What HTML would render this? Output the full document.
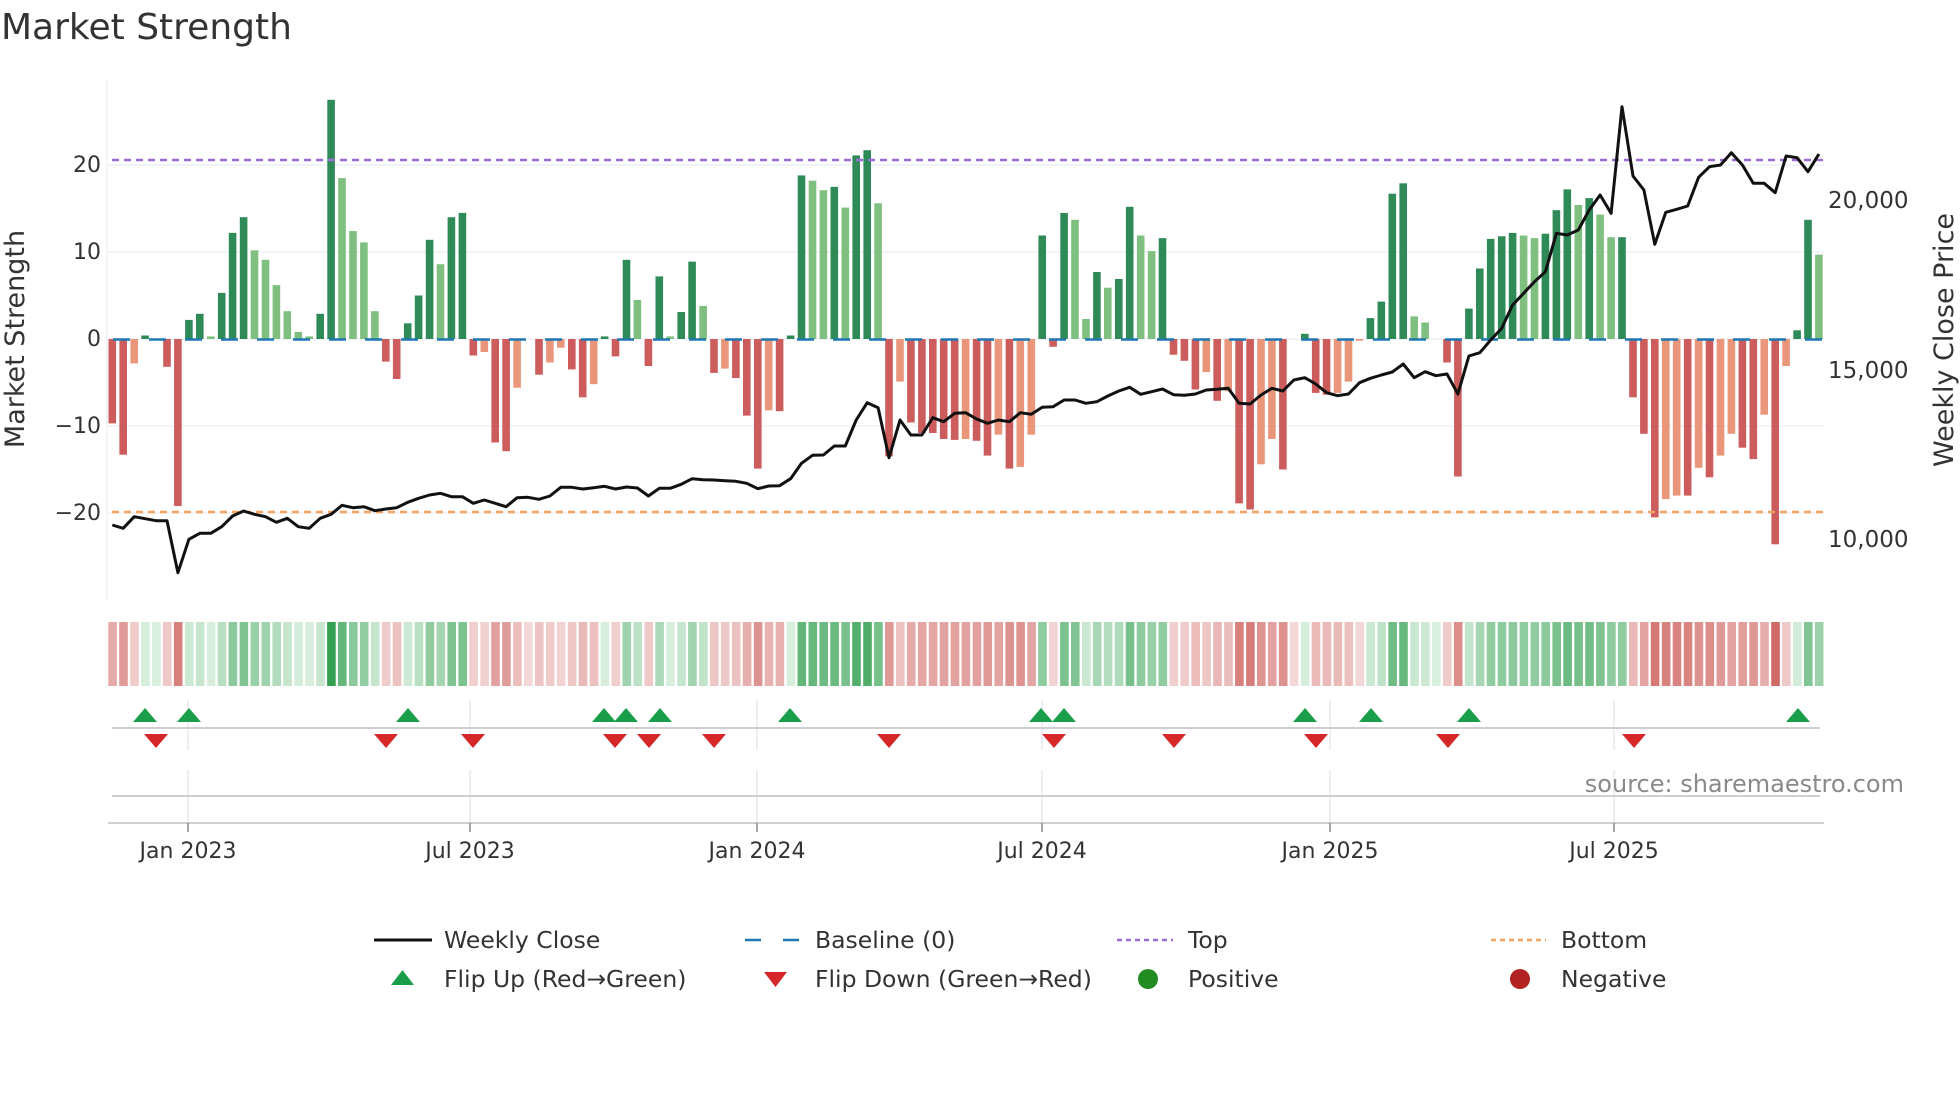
<!DOCTYPE html>
<html><head><meta charset="utf-8">
<style>
html,body{margin:0;padding:0;background:#fff;}
body{width:1960px;height:1102px;overflow:hidden;}
svg{display:block;font-family:"DejaVu Sans","Liberation Sans",sans-serif;}
</style></head>
<body>
<svg id="s" width="1960" height="1102" viewBox="0 0 1960 1102" xmlns="http://www.w3.org/2000/svg">
<rect width="1960" height="1102" fill="#fff"/>
<text x="1" y="39" font-size="36" fill="#333">Market Strength</text>
<g stroke="#eef0f5" stroke-width="1.5">
<line x1="108" y1="165" x2="1824" y2="165"/>
<line x1="108" y1="252" x2="1824" y2="252"/>
<line x1="108" y1="339" x2="1824" y2="339"/>
<line x1="108" y1="426" x2="1824" y2="426"/>
<line x1="108" y1="513" x2="1824" y2="513"/>
<line x1="107" y1="80" x2="107" y2="600"/>
</g>
<g font-size="22" fill="#333" text-anchor="end">
<text x="101" y="172">20</text>
<text x="101" y="259">10</text>
<text x="101" y="346">0</text>
<text x="101" y="433">−10</text>
<text x="101" y="520">−20</text>
</g>
<g font-size="23" fill="#333">
<text x="1828" y="208">20,000</text>
<text x="1828" y="378">15,000</text>
<text x="1828" y="547">10,000</text>
</g>
<text transform="translate(24,339) rotate(-90)" font-size="27" fill="#333" text-anchor="middle">Market Strength</text>
<text transform="translate(1953,340) rotate(-90)" font-size="27" fill="#333" text-anchor="middle">Weekly Close Price</text>
<g id="bars"></g>
<line x1="112" y1="160" x2="1824" y2="160" stroke="#9b6bd6" stroke-width="2.5" stroke-dasharray="7,5"/>
<line x1="112" y1="512" x2="1824" y2="512" stroke="#f4a460" stroke-width="2.5" stroke-dasharray="7,5"/>
<line x1="113" y1="339.5" x2="1824" y2="339.5" stroke="#1f77b4" stroke-width="2.5" stroke-dasharray="17,19"/>
<polyline id="price" fill="none" stroke="#111" stroke-width="3" stroke-linejoin="round"/>
<g id="heat"></g>
<g stroke="#e6e8ee" stroke-width="1.5">
<line x1="188" y1="700" x2="188" y2="750"/><line x1="188" y1="770" x2="188" y2="822"/>
<line x1="470" y1="700" x2="470" y2="750"/><line x1="470" y1="770" x2="470" y2="822"/>
<line x1="757" y1="700" x2="757" y2="750"/><line x1="757" y1="770" x2="757" y2="822"/>
<line x1="1042" y1="700" x2="1042" y2="750"/><line x1="1042" y1="770" x2="1042" y2="822"/>
<line x1="1330" y1="700" x2="1330" y2="750"/><line x1="1330" y1="770" x2="1330" y2="822"/>
<line x1="1614" y1="700" x2="1614" y2="750"/><line x1="1614" y1="770" x2="1614" y2="822"/>
</g>
<line x1="112" y1="728" x2="1820" y2="728" stroke="#cfcfd2" stroke-width="2"/>
<line x1="112" y1="796" x2="1820" y2="796" stroke="#cfcfd2" stroke-width="2"/>
<line x1="108" y1="823" x2="1824" y2="823" stroke="#cfcfd2" stroke-width="2"/>
<g id="marks"></g>
<g stroke="#888" stroke-width="1.5">
<line x1="188" y1="823" x2="188" y2="832"/><line x1="470" y1="823" x2="470" y2="832"/>
<line x1="757" y1="823" x2="757" y2="832"/><line x1="1042" y1="823" x2="1042" y2="832"/>
<line x1="1330" y1="823" x2="1330" y2="832"/><line x1="1614" y1="823" x2="1614" y2="832"/>
</g>
<g font-size="22" fill="#333" text-anchor="middle">
<text x="188" y="858">Jan 2023</text>
<text x="470" y="858">Jul 2023</text>
<text x="757" y="858">Jan 2024</text>
<text x="1042" y="858">Jul 2024</text>
<text x="1330" y="858">Jan 2025</text>
<text x="1614" y="858">Jul 2025</text>
</g>
<text x="1904" y="792" font-size="24" fill="#8a8a8a" text-anchor="end">source: sharemaestro.com</text>
<g font-size="23.5" fill="#333">
<line x1="374" y1="940" x2="432" y2="940" stroke="#111" stroke-width="3"/>
<text x="444" y="948">Weekly Close</text>
<line x1="745" y1="940" x2="800" y2="940" stroke="#1f77b4" stroke-width="2.5" stroke-dasharray="16,22"/>
<text x="815" y="948">Baseline (0)</text>
<line x1="1117" y1="940" x2="1173" y2="940" stroke="#9b6bd6" stroke-width="2.5" stroke-dasharray="5,4"/>
<text x="1188" y="948">Top</text>
<line x1="1491" y1="940" x2="1546" y2="940" stroke="#f4a460" stroke-width="2.5" stroke-dasharray="5,4"/>
<text x="1561" y="948">Bottom</text>
<polygon points="391,985 414,985 402.5,970" fill="#1a9e4a"/>
<text x="444" y="987">Flip Up (Red→Green)</text>
<polygon points="764,972 787,972 775.5,987" fill="#d62728"/>
<text x="815" y="987">Flip Down (Green→Red)</text>
<circle cx="1148" cy="979" r="10" fill="#228b22"/>
<text x="1188" y="987">Positive</text>
<circle cx="1520" cy="979" r="10" fill="#b22222"/>
<text x="1561" y="987">Negative</text>
</g>
</svg>
<script>
(function(){
var NS="http://www.w3.org/2000/svg";
var v=[-9.7,-13.3,-2.8,0.4,0,-3.2,-19.2,2.2,2.9,0.3,5.3,12.2,14,10.2,9.1,6.2,3.2,0.8,0.3,2.9,27.5,18.5,12.4,11.1,3.2,-2.6,-4.6,1.8,5,11.4,8.6,14,14.5,-1.9,-1.5,-11.9,-12.9,-5.6,0,-4.1,
-2.7,-1,-3.5,-6.7,-5.2,0.3,-2,9.1,4.5,-3.1,7.2,0.3,3.1,8.9,3.8,-3.9,-3.4,-4.5,-8.8,-14.9,-8.2,-8.3,0.4,18.8,18.2,17.1,17.5,15.1,21.1,21.7,15.6,-13.5,-4.9,-9.6,-10.8,-10.8,-11.5,-11.6,-11.5,-11.7,
-13.4,-11,-14.9,-14.7,-11,11.9,-0.9,14.5,13.7,2.3,7.7,5.9,6.9,15.2,11.9,10.1,11.6,-1.8,-2.5,-5.8,-3.8,-7.1,-6,-18.9,-19.6,-14.4,-11.5,-15,0,0.6,-6.2,-6.4,-6.2,-4.9,-0.2,2.4,4.3,16.7,17.9,2.6,
1.9,0,-2.7,-15.8,3.5,8.1,11.5,11.8,12.2,11.9,11.6,12.1,14.8,17.2,15.4,16.2,14.3,11.7,11.7,-6.7,-10.9,-20.5,-18.4,-18,-18,-14.8,-15.9,-13.4,-10.9,-12.5,-13.8,-8.7,-23.6,-3.1,1,13.7,9.7];
var p=[1335,1345,1310,1316,1322,1322,1478,1378,1360,1360,1340,1308,1293,1303,1310,1327,1315,1340,1345,1315,1303,1276,1283,1280,1292,1287,1283,1267,1255,1245,1240,1250,1250,1270,1260,1270,1280,1253,1252,1258,
1248,1222,1222,1227,1223,1219,1227,1221,1224,1248,1225,1225,1213,1196,1199,1200,1202,1204,1210,1226,1218,1217,1196,1150,1126,1125,1098,1098,1020,968,983,1133,1020,1065,1065,1013,1025,1000,998,1017,
1030,1020,1025,998,1003,982,980,960,960,970,965,948,933,922,943,935,927,944,946,942,930,928,925,970,972,945,925,933,900,893,912,938,947,942,908,895,885,876,852,
893,875,887,882,942,828,818,780,745,675,640,605,575,460,465,450,390,345,400,80,288,330,493,397,388,378,292,260,255,218,255,310,310,338,228,233,275,222];
var bars=document.getElementById("bars"),heat=document.getElementById("heat");
var n=v.length,dx=10.94,x0=112.3,Z=339,U=8.7;
function mix(a,b,t){return "rgb("+[0,1,2].map(function(k){return Math.round(a[k]+(b[k]-a[k])*t)}).join(",")+")";}
for(var i=0;i<n;i++){
  var val=v[i],pv=i>0?v[i-1]:0,x=x0+dx*i;
  if(val!==0){
    var c;
    if(val>0) c=(val>=pv)?"#2e8b57":"#7fbf7f";
    else c=(val<=pv)?"#cd5c5c":"#e9967a";
    var h=Math.abs(val)*U,r=document.createElementNS(NS,"rect");
    r.setAttribute("x",(x-3.8).toFixed(1));r.setAttribute("width","7.6");
    r.setAttribute("y",(val>0?Z-h:Z).toFixed(1));r.setAttribute("height",h.toFixed(1));
    r.setAttribute("fill",c);bars.appendChild(r);
  }
  var t=Math.min(1,Math.abs(val)/26),col;
  var sgn=val>0||(val===0&&pv>0);
  if(sgn) col=mix([226,243,230],[52,160,82],0.05+0.95*t);
  else col=mix([245,222,222],[205,95,90],0.05+0.95*t);
  var q=document.createElementNS(NS,"rect");
  q.setAttribute("x",(108.3+dx*i).toFixed(1));q.setAttribute("width","8.6");
  q.setAttribute("y","622");q.setAttribute("height","64");q.setAttribute("fill",col);
  heat.appendChild(q);
}
var pts=[];for(var j=0;j<p.length;j++){pts.push((x0+dx*j).toFixed(1)+","+(p[j]/3+80).toFixed(1));}
document.getElementById("price").setAttribute("points",pts.join(" "));
var m=document.getElementById("marks");
var ups=[145,189,408,604,626,660,790,1041,1064,1305,1371,1469,1798];
var dns=[156,386,473,615,649,714,889,1054,1174,1316,1448,1634];
ups.forEach(function(x){var g=document.createElementNS(NS,"polygon");g.setAttribute("points",(x-12)+",722 "+(x+12)+",722 "+x+",708");g.setAttribute("fill","#1a9e4a");m.appendChild(g);});
dns.forEach(function(x){var g=document.createElementNS(NS,"polygon");g.setAttribute("points",(x-12)+",734 "+(x+12)+",734 "+x+",748");g.setAttribute("fill","#d62728");m.appendChild(g);});
})();
</script>
</body></html>
